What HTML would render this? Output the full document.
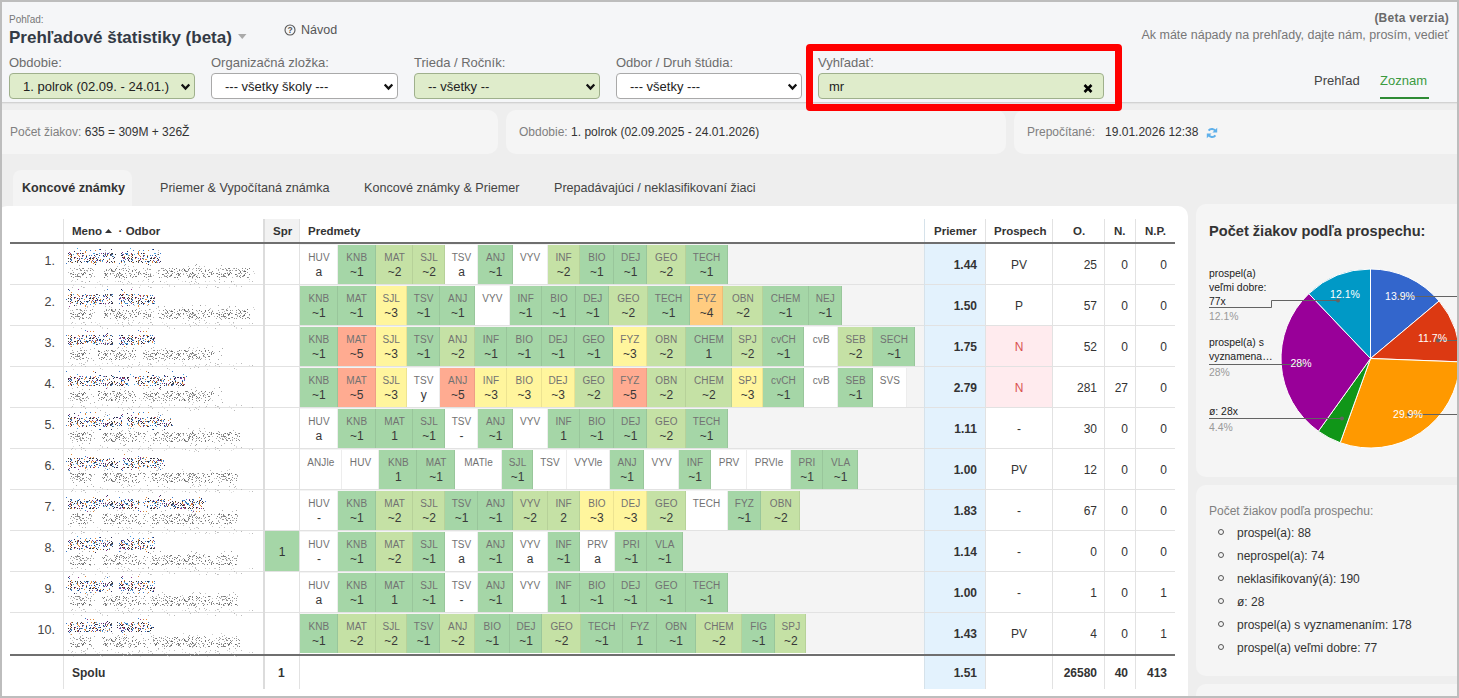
<!DOCTYPE html>
<html><head><meta charset="utf-8">
<style>
*{box-sizing:border-box}
html,body{margin:0;padding:0}
body{width:1459px;height:698px;overflow:hidden;position:relative;background:#eeeeee;font-family:"Liberation Sans",sans-serif;color:#333}
.frame{position:absolute;left:0;top:0;width:1459px;height:698px;border:2px solid #bdbdbd;pointer-events:none;z-index:50}
.abs{position:absolute;white-space:nowrap}
.hdr{position:absolute;left:0;top:0;width:1459px;height:101.5px;background:#f5f6f8;box-shadow:0 1px 1.5px rgba(0,0,0,.16)}
.lbl{position:absolute;top:55px;font-size:13px;color:#6c6c6c;white-space:nowrap}
.sel{position:absolute;top:73px;height:26px;border:1px solid #a9a9a9;border-radius:4px;background:#fff;font-size:13px;color:#222;padding:5px 0 0 13px;white-space:nowrap;overflow:hidden}
.sel.gr{background:#dfeccb;border-color:#9fb08c}
.chev{position:absolute;right:3px;top:9px;width:11px;height:8px}
.stat{position:absolute;top:110px;height:44px;background:#f5f5f5;border-radius:10px;font-size:12px;color:#333;padding:15px 0 0 9px;white-space:nowrap}
.stat .k{color:#808080}
.tabs{position:absolute;top:170px;font-size:12.6px;color:#444;white-space:nowrap}
.panel{position:absolute;left:-3px;top:205.5px;width:1191px;height:500px;background:#fff;border-radius:10px 10px 0 0}
.th{position:absolute;top:219px;height:24px;font-size:11.5px;font-weight:bold;color:#333;padding-top:6px;white-space:nowrap}
.row{position:absolute;left:300px;width:624px;height:40px;background:#f4f4f4}
.cells{display:flex;height:39px;margin-top:1px}
.c{flex:none;height:39px;text-align:center;box-shadow:inset -1px 0 0 rgba(0,0,0,.07);position:relative}
.c .l{position:absolute;left:0;right:0;top:6.5px;font-size:10px;color:#727272;letter-spacing:.1px}
.c .g{position:absolute;left:0;right:0;top:20px;font-size:12px;color:#383838}
.num,.pv,.pr,.o,.n,.np{position:absolute;height:40px;font-size:12px;padding-top:14px;white-space:nowrap}
.num{left:10px;width:45px;text-align:right;font-size:12.5px;color:#444;padding-top:10px!important}
.pv{left:925px;width:52px;text-align:right;font-weight:bold}
.pr{left:986px;width:66px;text-align:center}
.o{left:1053px;width:44px;text-align:right}
.n{left:1105px;width:23px;text-align:right}
.np{left:1136px;width:31px;text-align:right}
.hl{position:absolute;background:#e2e2e2}
</style></head><body>
<div class="frame"></div>
<div class="hdr"></div>
<div class="abs" style="left:9px;top:14px;font-size:10px;color:#777">Pohľad:</div>
<div class="abs" style="left:9px;top:27.5px;font-size:17px;font-weight:bold;color:#333a45">Prehľadové štatistiky (beta)</div>
<svg class="abs" style="left:238px;top:34px" width="9" height="6"><path d="M0 0H8.5L4.25 5z" fill="#aaa"/></svg>
<svg class="abs" style="left:284px;top:24px" width="12" height="12"><circle cx="6" cy="6" r="5" fill="none" stroke="#555" stroke-width="1.1"/><text x="6" y="9.3" font-size="8.5" font-weight="bold" text-anchor="middle" fill="#555" font-family="Liberation Sans">?</text></svg>
<div class="abs" style="left:301px;top:23px;font-size:12.5px;color:#555">Návod</div>

<div class="lbl" style="left:9px">Obdobie:</div>
<div class="lbl" style="left:211px">Organizačná zložka:</div>
<div class="lbl" style="left:414px">Trieda / Ročník:</div>
<div class="lbl" style="left:616px">Odbor / Druh štúdia:</div>
<div class="lbl" style="left:818px">Vyhľadať:</div>

<div class="sel gr" style="left:9px;width:186px">1. polrok (02.09. - 24.01.)<svg class="chev" viewBox="0 0 10 8"><path d="M1.2 1.5L5 5.6L8.8 1.5" fill="none" stroke="#111" stroke-width="2.3"/></svg></div>
<div class="sel" style="left:211px;width:187px">--- všetky školy ---<svg class="chev" viewBox="0 0 10 8"><path d="M1.2 1.5L5 5.6L8.8 1.5" fill="none" stroke="#111" stroke-width="2.3"/></svg></div>
<div class="sel gr" style="left:414px;width:186px">-- všetky --<svg class="chev" viewBox="0 0 10 8"><path d="M1.2 1.5L5 5.6L8.8 1.5" fill="none" stroke="#111" stroke-width="2.3"/></svg></div>
<div class="sel" style="left:616px;width:186px">--- všetky ---<svg class="chev" viewBox="0 0 10 8"><path d="M1.2 1.5L5 5.6L8.8 1.5" fill="none" stroke="#111" stroke-width="2.3"/></svg></div>
<div class="sel gr" style="left:818px;width:286px;padding-left:10px">mr<svg class="abs" style="left:263.5px;top:10px" width="10" height="9" viewBox="0 0 10 9"><path d="M1.5 1L8.5 8M8.5 1L1.5 8" stroke="#000" stroke-width="2.6"/></svg></div>
<div class="abs" style="left:806px;top:44px;width:316px;height:67px;border:7px solid #ff0000;border-radius:4px;z-index:20"></div>

<div class="abs" style="right:10px;top:11px;font-size:12px;font-weight:bold;color:#6a6a6a;letter-spacing:.25px">(Beta verzia)</div>
<div class="abs" style="right:10px;top:28px;font-size:12.5px;color:#777">Ak máte nápady na prehľady, dajte nám, prosím, vedieť</div>
<div class="abs" style="left:1314px;top:72.5px;font-size:13px;color:#444">Prehľad</div>
<div class="abs" style="left:1380px;top:72.5px;font-size:13px;color:#3b9a3f">Zoznam</div>
<div class="abs" style="left:1380px;top:97px;width:49px;height:2px;background:#2e8b35"></div>

<div class="stat" style="left:-10px;width:508px;padding-left:20px"><span class="k">Počet žiakov:</span> 635 = 309M + 326Ž</div>
<div class="stat" style="left:506px;width:500px;padding-left:13px"><span class="k">Obdobie:</span> 1. polrok (02.09.2025 - 24.01.2026)</div>
<div class="stat" style="left:1014px;width:460px;padding-left:13px"><span class="k">Prepočítané:</span>&nbsp;&nbsp; 19.01.2026 12:38 <svg width="12" height="12" viewBox="0 0 12 12" style="vertical-align:-3px;margin-left:4px"><path d="M9.6 4.6A4 4 0 0 0 2.6 3.6M2.4 7.4A4 4 0 0 0 9.4 8.4" fill="none" stroke="#5fb0ea" stroke-width="2"/><path d="M11.2 0.8V5.6H6.4zM0.8 11.2V6.4H5.6z" fill="#5fb0ea"/></svg></div>

<div class="abs" style="left:13px;top:170px;width:119px;height:36px;background:#f4f4f4;border-radius:8px 8px 0 0"></div>
<div class="tabs" style="left:22px;top:181px;font-weight:bold;color:#333">Koncové známky</div>
<div class="tabs" style="left:160px;top:181px">Priemer &amp; Vypočítaná známka</div>
<div class="tabs" style="left:364px;top:181px">Koncové známky &amp; Priemer</div>
<div class="tabs" style="left:554px;top:181px">Prepadávajúci / neklasifikovaní žiaci</div>

<div class="panel"></div>
<!-- table header -->
<div class="abs" style="left:264px;top:219px;width:36px;height:24px;background:#f2f2f2"></div>
<div class="abs" style="left:925px;top:244px;width:60px;height:445px;background:#e3f2fd"></div>
<div class="th" style="left:72px">Meno <svg width="7" height="4" style="vertical-align:2px"><path d="M0 4L3.5 0L7 4z" fill="#333"/></svg>&nbsp; · Odbor</div>
<div class="th" style="left:273px">Spr</div>
<div class="th" style="left:308px">Predmety</div>
<div class="th" style="left:934px">Priemer</div>
<div class="th" style="left:994px">Prospech</div>
<div class="th" style="left:1073px">O.</div>
<div class="th" style="left:1114px">N.</div>
<div class="th" style="left:1145px">N.P.</div>

<div class="row" style="top:244px"><div class="cells"><div class="c" style="width:37.9px;background:#ffffff"><span class="l">HUV</span><span class="g">a</span></div><div class="c" style="width:37.8px;background:#a5d6a7"><span class="l">KNB</span><span class="g">~1</span></div><div class="c" style="width:37.8px;background:#c5e1a5"><span class="l">MAT</span><span class="g">~2</span></div><div class="c" style="width:31.2px;background:#c5e1a5"><span class="l">SJL</span><span class="g">~2</span></div><div class="c" style="width:33.7px;background:#ffffff"><span class="l">TSV</span><span class="g">a</span></div><div class="c" style="width:34.5px;background:#a5d6a7"><span class="l">ANJ</span><span class="g">~1</span></div><div class="c" style="width:34.7px;background:#ffffff"><span class="l">VYV</span><span class="g"></span></div><div class="c" style="width:32.1px;background:#c5e1a5"><span class="l">INF</span><span class="g">~2</span></div><div class="c" style="width:34.6px;background:#a5d6a7"><span class="l">BIO</span><span class="g">~1</span></div><div class="c" style="width:32.9px;background:#a5d6a7"><span class="l">DEJ</span><span class="g">~1</span></div><div class="c" style="width:38.4px;background:#c5e1a5"><span class="l">GEO</span><span class="g">~2</span></div><div class="c" style="width:42.0px;background:#a5d6a7"><span class="l">TECH</span><span class="g">~1</span></div></div></div>
<div class="num" style="top:244px">1.</div>
<div class="pv" style="top:244px">1.44</div>
<div class="pr" style="top:244px">PV</div>
<div class="o" style="top:244px">25</div>
<div class="n" style="top:244px">0</div>
<div class="np" style="top:244px">0</div>
<div class="row" style="top:285px"><div class="cells"><div class="c" style="width:37.8px;background:#a5d6a7"><span class="l">KNB</span><span class="g">~1</span></div><div class="c" style="width:37.8px;background:#a5d6a7"><span class="l">MAT</span><span class="g">~1</span></div><div class="c" style="width:31.2px;background:#fff59d"><span class="l">SJL</span><span class="g">~3</span></div><div class="c" style="width:33.7px;background:#a5d6a7"><span class="l">TSV</span><span class="g">~1</span></div><div class="c" style="width:34.5px;background:#a5d6a7"><span class="l">ANJ</span><span class="g">~1</span></div><div class="c" style="width:34.7px;background:#ffffff"><span class="l">VYV</span><span class="g"></span></div><div class="c" style="width:32.1px;background:#a5d6a7"><span class="l">INF</span><span class="g">~1</span></div><div class="c" style="width:34.6px;background:#a5d6a7"><span class="l">BIO</span><span class="g">~1</span></div><div class="c" style="width:32.9px;background:#a5d6a7"><span class="l">DEJ</span><span class="g">~1</span></div><div class="c" style="width:38.4px;background:#c5e1a5"><span class="l">GEO</span><span class="g">~2</span></div><div class="c" style="width:42.0px;background:#a5d6a7"><span class="l">TECH</span><span class="g">~1</span></div><div class="c" style="width:33.8px;background:#ffcc80"><span class="l">FYZ</span><span class="g">~4</span></div><div class="c" style="width:39.1px;background:#c5e1a5"><span class="l">OBN</span><span class="g">~2</span></div><div class="c" style="width:46.2px;background:#a5d6a7"><span class="l">CHEM</span><span class="g">~1</span></div><div class="c" style="width:33.3px;background:#a5d6a7"><span class="l">NEJ</span><span class="g">~1</span></div></div></div>
<div class="num" style="top:285px">2.</div>
<div class="pv" style="top:285px">1.50</div>
<div class="pr" style="top:285px">P</div>
<div class="o" style="top:285px">57</div>
<div class="n" style="top:285px">0</div>
<div class="np" style="top:285px">0</div>
<div class="row" style="top:326px"><div class="cells"><div class="c" style="width:37.8px;background:#a5d6a7"><span class="l">KNB</span><span class="g">~1</span></div><div class="c" style="width:37.8px;background:#ffab91"><span class="l">MAT</span><span class="g">~5</span></div><div class="c" style="width:31.2px;background:#fff59d"><span class="l">SJL</span><span class="g">~3</span></div><div class="c" style="width:33.7px;background:#a5d6a7"><span class="l">TSV</span><span class="g">~1</span></div><div class="c" style="width:34.5px;background:#c5e1a5"><span class="l">ANJ</span><span class="g">~2</span></div><div class="c" style="width:32.1px;background:#a5d6a7"><span class="l">INF</span><span class="g">~1</span></div><div class="c" style="width:34.6px;background:#a5d6a7"><span class="l">BIO</span><span class="g">~1</span></div><div class="c" style="width:32.9px;background:#a5d6a7"><span class="l">DEJ</span><span class="g">~1</span></div><div class="c" style="width:38.4px;background:#a5d6a7"><span class="l">GEO</span><span class="g">~1</span></div><div class="c" style="width:33.8px;background:#fff59d"><span class="l">FYZ</span><span class="g">~3</span></div><div class="c" style="width:39.1px;background:#c5e1a5"><span class="l">OBN</span><span class="g">~2</span></div><div class="c" style="width:46.2px;background:#a5d6a7"><span class="l">CHEM</span><span class="g">1</span></div><div class="c" style="width:31.0px;background:#c5e1a5"><span class="l">SPJ</span><span class="g">~2</span></div><div class="c" style="width:41.0px;background:#a5d6a7"><span class="l">cvCH</span><span class="g">~1</span></div><div class="c" style="width:34.4px;background:#ffffff"><span class="l">cvB</span><span class="g"></span></div><div class="c" style="width:34.5px;background:#c5e1a5"><span class="l">SEB</span><span class="g">~2</span></div><div class="c" style="width:42.2px;background:#a5d6a7"><span class="l">SECH</span><span class="g">~1</span></div></div></div>
<div class="num" style="top:326px">3.</div>
<div class="pv" style="top:326px">1.75</div>
<div class="pr" style="background:#ffebee;color:#d9534f;top:326px">N</div>
<div class="o" style="top:326px">52</div>
<div class="n" style="top:326px">0</div>
<div class="np" style="top:326px">0</div>
<div class="row" style="top:367px"><div class="cells"><div class="c" style="width:37.8px;background:#a5d6a7"><span class="l">KNB</span><span class="g">~1</span></div><div class="c" style="width:37.8px;background:#ffab91"><span class="l">MAT</span><span class="g">~5</span></div><div class="c" style="width:31.2px;background:#fff59d"><span class="l">SJL</span><span class="g">~3</span></div><div class="c" style="width:33.7px;background:#ffffff"><span class="l">TSV</span><span class="g">y</span></div><div class="c" style="width:34.5px;background:#ffab91"><span class="l">ANJ</span><span class="g">~5</span></div><div class="c" style="width:32.1px;background:#fff59d"><span class="l">INF</span><span class="g">~3</span></div><div class="c" style="width:34.6px;background:#fff59d"><span class="l">BIO</span><span class="g">~3</span></div><div class="c" style="width:32.9px;background:#fff59d"><span class="l">DEJ</span><span class="g">~3</span></div><div class="c" style="width:38.4px;background:#c5e1a5"><span class="l">GEO</span><span class="g">~2</span></div><div class="c" style="width:33.8px;background:#ffab91"><span class="l">FYZ</span><span class="g">~5</span></div><div class="c" style="width:39.1px;background:#c5e1a5"><span class="l">OBN</span><span class="g">~2</span></div><div class="c" style="width:46.2px;background:#c5e1a5"><span class="l">CHEM</span><span class="g">~2</span></div><div class="c" style="width:31.0px;background:#fff59d"><span class="l">SPJ</span><span class="g">~3</span></div><div class="c" style="width:41.0px;background:#a5d6a7"><span class="l">cvCH</span><span class="g">~1</span></div><div class="c" style="width:34.4px;background:#ffffff"><span class="l">cvB</span><span class="g"></span></div><div class="c" style="width:34.5px;background:#a5d6a7"><span class="l">SEB</span><span class="g">~1</span></div><div class="c" style="width:33.9px;background:#ffffff"><span class="l">SVS</span><span class="g"></span></div></div></div>
<div class="num" style="top:367px">4.</div>
<div class="pv" style="top:367px">2.79</div>
<div class="pr" style="background:#ffebee;color:#d9534f;top:367px">N</div>
<div class="o" style="top:367px">281</div>
<div class="n" style="top:367px">27</div>
<div class="np" style="top:367px">0</div>
<div class="row" style="top:408px"><div class="cells"><div class="c" style="width:37.9px;background:#ffffff"><span class="l">HUV</span><span class="g">a</span></div><div class="c" style="width:37.8px;background:#a5d6a7"><span class="l">KNB</span><span class="g">~1</span></div><div class="c" style="width:37.8px;background:#a5d6a7"><span class="l">MAT</span><span class="g">1</span></div><div class="c" style="width:31.2px;background:#a5d6a7"><span class="l">SJL</span><span class="g">~1</span></div><div class="c" style="width:33.7px;background:#ffffff"><span class="l">TSV</span><span class="g">-</span></div><div class="c" style="width:34.5px;background:#a5d6a7"><span class="l">ANJ</span><span class="g">~1</span></div><div class="c" style="width:34.7px;background:#ffffff"><span class="l">VYV</span><span class="g"></span></div><div class="c" style="width:32.1px;background:#a5d6a7"><span class="l">INF</span><span class="g">1</span></div><div class="c" style="width:34.6px;background:#a5d6a7"><span class="l">BIO</span><span class="g">~1</span></div><div class="c" style="width:32.9px;background:#a5d6a7"><span class="l">DEJ</span><span class="g">~1</span></div><div class="c" style="width:38.4px;background:#c5e1a5"><span class="l">GEO</span><span class="g">~2</span></div><div class="c" style="width:42.0px;background:#a5d6a7"><span class="l">TECH</span><span class="g">~1</span></div></div></div>
<div class="num" style="top:408px">5.</div>
<div class="pv" style="top:408px">1.11</div>
<div class="pr" style="top:408px">-</div>
<div class="o" style="top:408px">30</div>
<div class="n" style="top:408px">0</div>
<div class="np" style="top:408px">0</div>
<div class="row" style="top:449px"><div class="cells"><div class="c" style="width:41.6px;background:#ffffff"><span class="l">ANJle</span><span class="g"></span></div><div class="c" style="width:37.9px;background:#ffffff"><span class="l">HUV</span><span class="g"></span></div><div class="c" style="width:37.8px;background:#a5d6a7"><span class="l">KNB</span><span class="g">1</span></div><div class="c" style="width:37.8px;background:#a5d6a7"><span class="l">MAT</span><span class="g">~1</span></div><div class="c" style="width:46.9px;background:#ffffff"><span class="l">MATle</span><span class="g"></span></div><div class="c" style="width:31.2px;background:#a5d6a7"><span class="l">SJL</span><span class="g">~1</span></div><div class="c" style="width:33.7px;background:#ffffff"><span class="l">TSV</span><span class="g"></span></div><div class="c" style="width:43.0px;background:#ffffff"><span class="l">VYVle</span><span class="g"></span></div><div class="c" style="width:34.5px;background:#a5d6a7"><span class="l">ANJ</span><span class="g">~1</span></div><div class="c" style="width:34.7px;background:#ffffff"><span class="l">VYV</span><span class="g"></span></div><div class="c" style="width:32.1px;background:#a5d6a7"><span class="l">INF</span><span class="g">~1</span></div><div class="c" style="width:35.8px;background:#ffffff"><span class="l">PRV</span><span class="g"></span></div><div class="c" style="width:44.2px;background:#ffffff"><span class="l">PRVle</span><span class="g"></span></div><div class="c" style="width:31.8px;background:#a5d6a7"><span class="l">PRI</span><span class="g">~1</span></div><div class="c" style="width:35.3px;background:#a5d6a7"><span class="l">VLA</span><span class="g">~1</span></div></div></div>
<div class="num" style="top:449px">6.</div>
<div class="pv" style="top:449px">1.00</div>
<div class="pr" style="top:449px">PV</div>
<div class="o" style="top:449px">12</div>
<div class="n" style="top:449px">0</div>
<div class="np" style="top:449px">0</div>
<div class="row" style="top:490px"><div class="cells"><div class="c" style="width:37.9px;background:#ffffff"><span class="l">HUV</span><span class="g">-</span></div><div class="c" style="width:37.8px;background:#a5d6a7"><span class="l">KNB</span><span class="g">~1</span></div><div class="c" style="width:37.8px;background:#c5e1a5"><span class="l">MAT</span><span class="g">~2</span></div><div class="c" style="width:31.2px;background:#c5e1a5"><span class="l">SJL</span><span class="g">~2</span></div><div class="c" style="width:33.7px;background:#a5d6a7"><span class="l">TSV</span><span class="g">~1</span></div><div class="c" style="width:34.5px;background:#a5d6a7"><span class="l">ANJ</span><span class="g">~1</span></div><div class="c" style="width:34.7px;background:#c5e1a5"><span class="l">VYV</span><span class="g">~2</span></div><div class="c" style="width:32.1px;background:#c5e1a5"><span class="l">INF</span><span class="g">2</span></div><div class="c" style="width:34.6px;background:#fff59d"><span class="l">BIO</span><span class="g">~3</span></div><div class="c" style="width:32.9px;background:#fff59d"><span class="l">DEJ</span><span class="g">~3</span></div><div class="c" style="width:38.4px;background:#c5e1a5"><span class="l">GEO</span><span class="g">~2</span></div><div class="c" style="width:42.0px;background:#ffffff"><span class="l">TECH</span><span class="g"></span></div><div class="c" style="width:33.8px;background:#a5d6a7"><span class="l">FYZ</span><span class="g">~1</span></div><div class="c" style="width:39.1px;background:#c5e1a5"><span class="l">OBN</span><span class="g">~2</span></div></div></div>
<div class="num" style="top:490px">7.</div>
<div class="pv" style="top:490px">1.83</div>
<div class="pr" style="top:490px">-</div>
<div class="o" style="top:490px">67</div>
<div class="n" style="top:490px">0</div>
<div class="np" style="top:490px">0</div>
<div class="row" style="top:531px"><div class="cells"><div class="c" style="width:37.9px;background:#ffffff"><span class="l">HUV</span><span class="g">-</span></div><div class="c" style="width:37.8px;background:#a5d6a7"><span class="l">KNB</span><span class="g">~1</span></div><div class="c" style="width:37.8px;background:#c5e1a5"><span class="l">MAT</span><span class="g">~2</span></div><div class="c" style="width:31.2px;background:#a5d6a7"><span class="l">SJL</span><span class="g">~1</span></div><div class="c" style="width:33.7px;background:#ffffff"><span class="l">TSV</span><span class="g">a</span></div><div class="c" style="width:34.5px;background:#a5d6a7"><span class="l">ANJ</span><span class="g">~1</span></div><div class="c" style="width:34.7px;background:#ffffff"><span class="l">VYV</span><span class="g">a</span></div><div class="c" style="width:32.1px;background:#a5d6a7"><span class="l">INF</span><span class="g">~1</span></div><div class="c" style="width:35.8px;background:#ffffff"><span class="l">PRV</span><span class="g">a</span></div><div class="c" style="width:31.8px;background:#a5d6a7"><span class="l">PRI</span><span class="g">~1</span></div><div class="c" style="width:35.3px;background:#a5d6a7"><span class="l">VLA</span><span class="g">~1</span></div></div></div>
<div class="num" style="top:531px">8.</div>
<div class="pv" style="top:531px">1.14</div>
<div class="pr" style="top:531px">-</div>
<div class="o" style="top:531px">0</div>
<div class="n" style="top:531px">0</div>
<div class="np" style="top:531px">0</div>
<div class="row" style="top:572px"><div class="cells"><div class="c" style="width:37.9px;background:#ffffff"><span class="l">HUV</span><span class="g">a</span></div><div class="c" style="width:37.8px;background:#a5d6a7"><span class="l">KNB</span><span class="g">~1</span></div><div class="c" style="width:37.8px;background:#a5d6a7"><span class="l">MAT</span><span class="g">1</span></div><div class="c" style="width:31.2px;background:#a5d6a7"><span class="l">SJL</span><span class="g">~1</span></div><div class="c" style="width:33.7px;background:#ffffff"><span class="l">TSV</span><span class="g">-</span></div><div class="c" style="width:34.5px;background:#a5d6a7"><span class="l">ANJ</span><span class="g">~1</span></div><div class="c" style="width:34.7px;background:#ffffff"><span class="l">VYV</span><span class="g"></span></div><div class="c" style="width:32.1px;background:#a5d6a7"><span class="l">INF</span><span class="g">1</span></div><div class="c" style="width:34.6px;background:#a5d6a7"><span class="l">BIO</span><span class="g">~1</span></div><div class="c" style="width:32.9px;background:#a5d6a7"><span class="l">DEJ</span><span class="g">~1</span></div><div class="c" style="width:38.4px;background:#a5d6a7"><span class="l">GEO</span><span class="g">~1</span></div><div class="c" style="width:42.0px;background:#a5d6a7"><span class="l">TECH</span><span class="g">~1</span></div></div></div>
<div class="num" style="top:572px">9.</div>
<div class="pv" style="top:572px">1.00</div>
<div class="pr" style="top:572px">-</div>
<div class="o" style="top:572px">1</div>
<div class="n" style="top:572px">0</div>
<div class="np" style="top:572px">1</div>
<div class="row" style="top:613px"><div class="cells"><div class="c" style="width:37.8px;background:#a5d6a7"><span class="l">KNB</span><span class="g">~1</span></div><div class="c" style="width:37.8px;background:#c5e1a5"><span class="l">MAT</span><span class="g">~2</span></div><div class="c" style="width:31.2px;background:#c5e1a5"><span class="l">SJL</span><span class="g">~2</span></div><div class="c" style="width:33.7px;background:#a5d6a7"><span class="l">TSV</span><span class="g">~1</span></div><div class="c" style="width:34.5px;background:#c5e1a5"><span class="l">ANJ</span><span class="g">~2</span></div><div class="c" style="width:34.6px;background:#a5d6a7"><span class="l">BIO</span><span class="g">~1</span></div><div class="c" style="width:32.9px;background:#a5d6a7"><span class="l">DEJ</span><span class="g">~1</span></div><div class="c" style="width:38.4px;background:#c5e1a5"><span class="l">GEO</span><span class="g">~2</span></div><div class="c" style="width:42.0px;background:#a5d6a7"><span class="l">TECH</span><span class="g">~1</span></div><div class="c" style="width:33.8px;background:#a5d6a7"><span class="l">FYZ</span><span class="g">1</span></div><div class="c" style="width:39.1px;background:#a5d6a7"><span class="l">OBN</span><span class="g">~1</span></div><div class="c" style="width:46.2px;background:#c5e1a5"><span class="l">CHEM</span><span class="g">~2</span></div><div class="c" style="width:33.5px;background:#a5d6a7"><span class="l">FIG</span><span class="g">~1</span></div><div class="c" style="width:31.0px;background:#c5e1a5"><span class="l">SPJ</span><span class="g">~2</span></div></div></div>
<div class="num" style="top:613px">10.</div>
<div class="pv" style="top:613px">1.43</div>
<div class="pr" style="top:613px">PV</div>
<div class="o" style="top:613px">4</div>
<div class="n" style="top:613px">0</div>
<div class="np" style="top:613px">1</div>

<!-- spr green cell row 8 -->
<div class="abs" style="left:265px;top:531px;width:34px;height:40px;background:#a5d6a7;font-size:12px;text-align:center;padding-top:14px">1</div>

<!-- grid lines -->
<div class="hl" style="left:10px;top:284px;width:1165px;height:1px"></div>
<div class="hl" style="left:10px;top:325px;width:1165px;height:1px"></div>
<div class="hl" style="left:10px;top:366px;width:1165px;height:1px"></div>
<div class="hl" style="left:10px;top:407px;width:1165px;height:1px"></div>
<div class="hl" style="left:10px;top:448px;width:1165px;height:1px"></div>
<div class="hl" style="left:10px;top:489px;width:1165px;height:1px"></div>
<div class="hl" style="left:10px;top:530px;width:1165px;height:1px"></div>
<div class="hl" style="left:10px;top:571px;width:1165px;height:1px"></div>
<div class="hl" style="left:10px;top:612px;width:1165px;height:1px"></div>
<div class="hl" style="left:63px;top:219px;width:1px;height:470px"></div>
<div class="hl" style="left:263px;top:219px;width:2px;height:470px;background:#dcdcdc"></div>
<div class="hl" style="left:299px;top:219px;width:1px;height:470px"></div>
<div class="hl" style="left:924px;top:219px;width:1px;height:470px;background:#d6e2ea"></div>
<div class="hl" style="left:985px;top:219px;width:1px;height:470px"></div>
<div class="hl" style="left:1052px;top:219px;width:1px;height:470px"></div>
<div class="hl" style="left:1104px;top:219px;width:1px;height:470px"></div>
<div class="hl" style="left:1135px;top:219px;width:1px;height:470px"></div>
<div class="abs" style="left:10px;top:242px;width:1165px;height:2px;background:#6f6f6f"></div>
<div class="abs" style="left:10px;top:654px;width:1165px;height:2px;background:#6f6f6f"></div>

<!-- footer -->
<div class="abs" style="left:72px;top:666px;font-size:12px;font-weight:bold">Spolu</div>
<div class="abs" style="left:278px;top:666px;font-size:12px;font-weight:bold">1</div>
<div class="abs" style="left:925px;width:52px;text-align:right;top:666px;font-size:12px;font-weight:bold">1.51</div>
<div class="abs" style="left:1053px;width:44px;text-align:right;top:666px;font-size:12px;font-weight:bold">26580</div>
<div class="abs" style="left:1105px;width:23px;text-align:right;top:666px;font-size:12px;font-weight:bold">40</div>
<div class="abs" style="left:1136px;width:31px;text-align:right;top:666px;font-size:12px;font-weight:bold">413</div>

<svg class="abs" style="left:0;top:0;z-index:5" width="300" height="698"><defs><pattern id="pn" width="61" height="10" patternUnits="userSpaceOnUse"><rect x="20" y="2" width="1" height="1" fill="#333"/><rect x="41" y="0" width="1" height="1" fill="#3a78c9"/><rect x="52" y="8" width="1" height="1" fill="#3a78c9"/><rect x="23" y="9" width="1" height="1" fill="#e08a3c"/><rect x="58" y="8" width="1" height="1" fill="#8a3a8a"/><rect x="2" y="1" width="1" height="1" fill="#333"/><rect x="26" y="1" width="1" height="1" fill="#8a3a8a"/><rect x="5" y="8" width="1" height="1" fill="#333"/><rect x="3" y="9" width="1" height="1" fill="#3a78c9"/><rect x="60" y="3" width="1" height="1" fill="#e08a3c"/><rect x="36" y="9" width="1" height="1" fill="#333"/><rect x="3" y="3" width="1" height="1" fill="#e08a3c"/><rect x="35" y="2" width="1" height="1" fill="#4aa3e0"/><rect x="26" y="2" width="1" height="1" fill="#3a78c9"/><rect x="36" y="4" width="1" height="1" fill="#2b2b55"/><rect x="6" y="9" width="1" height="1" fill="#8a3a8a"/><rect x="23" y="1" width="1" height="1" fill="#3a78c9"/><rect x="36" y="0" width="1" height="1" fill="#8a3a8a"/><rect x="31" y="8" width="1" height="1" fill="#333"/><rect x="49" y="5" width="1" height="1" fill="#555"/><rect x="37" y="7" width="1" height="1" fill="#c9652b"/><rect x="19" y="3" width="1" height="1" fill="#2b2b55"/><rect x="44" y="3" width="1" height="1" fill="#3a78c9"/><rect x="36" y="4" width="1" height="1" fill="#555"/><rect x="56" y="5" width="1" height="1" fill="#555"/><rect x="18" y="9" width="1" height="1" fill="#3a78c9"/><rect x="7" y="8" width="1" height="1" fill="#333"/><rect x="10" y="5" width="1" height="1" fill="#2b2b55"/><rect x="59" y="7" width="1" height="1" fill="#333"/><rect x="2" y="1" width="1" height="1" fill="#c9652b"/><rect x="21" y="5" width="1" height="1" fill="#555"/><rect x="37" y="7" width="1" height="1" fill="#3a78c9"/><rect x="53" y="1" width="1" height="1" fill="#4aa3e0"/><rect x="30" y="1" width="1" height="1" fill="#e08a3c"/><rect x="46" y="4" width="1" height="1" fill="#555"/><rect x="18" y="6" width="1" height="1" fill="#c9652b"/><rect x="1" y="7" width="1" height="1" fill="#c9652b"/><rect x="10" y="9" width="1" height="1" fill="#3a78c9"/><rect x="31" y="0" width="1" height="1" fill="#8a3a8a"/><rect x="49" y="4" width="1" height="1" fill="#2b2b55"/><rect x="47" y="3" width="1" height="1" fill="#333"/><rect x="25" y="7" width="1" height="1" fill="#3a78c9"/><rect x="10" y="7" width="1" height="1" fill="#333"/><rect x="35" y="4" width="1" height="1" fill="#2b2b55"/><rect x="52" y="6" width="1" height="1" fill="#4aa3e0"/><rect x="45" y="6" width="1" height="1" fill="#c9652b"/><rect x="43" y="6" width="1" height="1" fill="#8a3a8a"/><rect x="9" y="1" width="1" height="1" fill="#2b2b55"/><rect x="9" y="3" width="1" height="1" fill="#8a3a8a"/><rect x="0" y="7" width="1" height="1" fill="#2b2b55"/><rect x="16" y="4" width="1" height="1" fill="#e08a3c"/><rect x="9" y="6" width="1" height="1" fill="#c9652b"/><rect x="39" y="9" width="1" height="1" fill="#c9652b"/><rect x="60" y="2" width="1" height="1" fill="#e08a3c"/><rect x="29" y="8" width="1" height="1" fill="#333"/><rect x="25" y="6" width="1" height="1" fill="#333"/><rect x="6" y="7" width="1" height="1" fill="#333"/><rect x="3" y="3" width="1" height="1" fill="#3a78c9"/><rect x="13" y="7" width="1" height="1" fill="#2b2b55"/><rect x="7" y="5" width="1" height="1" fill="#e08a3c"/><rect x="6" y="0" width="1" height="1" fill="#2b2b55"/><rect x="34" y="1" width="1" height="1" fill="#c9652b"/><rect x="39" y="0" width="1" height="1" fill="#3a78c9"/><rect x="55" y="3" width="1" height="1" fill="#333"/><rect x="9" y="4" width="1" height="1" fill="#c9652b"/><rect x="38" y="5" width="1" height="1" fill="#555"/><rect x="7" y="1" width="1" height="1" fill="#555"/><rect x="29" y="7" width="1" height="1" fill="#555"/><rect x="19" y="1" width="1" height="1" fill="#2b2b55"/><rect x="6" y="5" width="1" height="1" fill="#4aa3e0"/><rect x="30" y="2" width="1" height="1" fill="#e08a3c"/><rect x="13" y="8" width="1" height="1" fill="#c9652b"/><rect x="9" y="8" width="1" height="1" fill="#e08a3c"/><rect x="48" y="8" width="1" height="1" fill="#4aa3e0"/><rect x="41" y="1" width="1" height="1" fill="#4aa3e0"/><rect x="33" y="5" width="1" height="1" fill="#2b2b55"/><rect x="22" y="3" width="1" height="1" fill="#c9652b"/><rect x="40" y="3" width="1" height="1" fill="#8a3a8a"/><rect x="51" y="3" width="1" height="1" fill="#333"/><rect x="47" y="3" width="1" height="1" fill="#8a3a8a"/><rect x="33" y="7" width="1" height="1" fill="#c9652b"/><rect x="46" y="0" width="1" height="1" fill="#e08a3c"/><rect x="50" y="4" width="1" height="1" fill="#555"/><rect x="16" y="3" width="1" height="1" fill="#c9652b"/><rect x="28" y="5" width="1" height="1" fill="#c9652b"/><rect x="5" y="3" width="1" height="1" fill="#3a78c9"/><rect x="14" y="7" width="1" height="1" fill="#8a3a8a"/><rect x="21" y="3" width="1" height="1" fill="#555"/><rect x="39" y="9" width="1" height="1" fill="#e08a3c"/><rect x="30" y="5" width="1" height="1" fill="#3a78c9"/><rect x="53" y="1" width="1" height="1" fill="#333"/><rect x="50" y="3" width="1" height="1" fill="#555"/><rect x="56" y="2" width="1" height="1" fill="#333"/><rect x="50" y="5" width="1" height="1" fill="#3a78c9"/><rect x="51" y="6" width="1" height="1" fill="#555"/><rect x="25" y="1" width="1" height="1" fill="#2b2b55"/><rect x="10" y="2" width="1" height="1" fill="#e08a3c"/><rect x="9" y="9" width="1" height="1" fill="#555"/><rect x="51" y="2" width="1" height="1" fill="#555"/><rect x="42" y="5" width="1" height="1" fill="#2b2b55"/><rect x="35" y="8" width="1" height="1" fill="#2b2b55"/><rect x="1" y="0" width="1" height="1" fill="#3a78c9"/><rect x="33" y="2" width="1" height="1" fill="#333"/><rect x="55" y="3" width="1" height="1" fill="#8a3a8a"/><rect x="1" y="4" width="1" height="1" fill="#8a3a8a"/><rect x="18" y="8" width="1" height="1" fill="#8a3a8a"/><rect x="48" y="9" width="1" height="1" fill="#c9652b"/><rect x="16" y="8" width="1" height="1" fill="#333"/><rect x="53" y="2" width="1" height="1" fill="#e08a3c"/><rect x="58" y="5" width="1" height="1" fill="#555"/><rect x="42" y="9" width="1" height="1" fill="#333"/><rect x="52" y="8" width="1" height="1" fill="#2b2b55"/><rect x="34" y="2" width="1" height="1" fill="#e08a3c"/><rect x="55" y="7" width="1" height="1" fill="#2b2b55"/><rect x="38" y="0" width="1" height="1" fill="#2b2b55"/><rect x="11" y="2" width="1" height="1" fill="#555"/><rect x="39" y="1" width="1" height="1" fill="#e08a3c"/><rect x="20" y="8" width="1" height="1" fill="#555"/><rect x="50" y="1" width="1" height="1" fill="#e08a3c"/><rect x="15" y="3" width="1" height="1" fill="#4aa3e0"/><rect x="2" y="1" width="1" height="1" fill="#555"/><rect x="35" y="0" width="1" height="1" fill="#3a78c9"/><rect x="28" y="5" width="1" height="1" fill="#8a3a8a"/><rect x="44" y="4" width="1" height="1" fill="#555"/><rect x="32" y="8" width="1" height="1" fill="#555"/><rect x="32" y="3" width="1" height="1" fill="#4aa3e0"/><rect x="59" y="8" width="1" height="1" fill="#8a3a8a"/><rect x="53" y="7" width="1" height="1" fill="#2b2b55"/><rect x="26" y="1" width="1" height="1" fill="#333"/><rect x="28" y="5" width="1" height="1" fill="#3a78c9"/><rect x="42" y="3" width="1" height="1" fill="#333"/><rect x="4" y="3" width="1" height="1" fill="#4aa3e0"/><rect x="50" y="1" width="1" height="1" fill="#2b2b55"/><rect x="60" y="5" width="1" height="1" fill="#2b2b55"/><rect x="16" y="2" width="1" height="1" fill="#555"/><rect x="14" y="1" width="1" height="1" fill="#333"/><rect x="56" y="7" width="1" height="1" fill="#2b2b55"/><rect x="42" y="3" width="1" height="1" fill="#2b2b55"/><rect x="45" y="6" width="1" height="1" fill="#333"/><rect x="21" y="6" width="1" height="1" fill="#8a3a8a"/><rect x="22" y="5" width="1" height="1" fill="#3a78c9"/><rect x="46" y="5" width="1" height="1" fill="#e08a3c"/><rect x="21" y="8" width="1" height="1" fill="#555"/><rect x="28" y="0" width="1" height="1" fill="#333"/><rect x="21" y="8" width="1" height="1" fill="#4aa3e0"/><rect x="32" y="1" width="1" height="1" fill="#3a78c9"/><rect x="58" y="3" width="1" height="1" fill="#3a78c9"/><rect x="5" y="4" width="1" height="1" fill="#4aa3e0"/><rect x="2" y="2" width="1" height="1" fill="#4aa3e0"/><rect x="48" y="2" width="1" height="1" fill="#333"/><rect x="54" y="4" width="1" height="1" fill="#333"/><rect x="9" y="8" width="1" height="1" fill="#555"/><rect x="44" y="5" width="1" height="1" fill="#3a78c9"/><rect x="17" y="0" width="1" height="1" fill="#2b2b55"/><rect x="27" y="1" width="1" height="1" fill="#4aa3e0"/><rect x="60" y="0" width="1" height="1" fill="#3a78c9"/><rect x="51" y="4" width="1" height="1" fill="#3a78c9"/><rect x="38" y="3" width="1" height="1" fill="#3a78c9"/><rect x="16" y="1" width="1" height="1" fill="#555"/><rect x="0" y="5" width="1" height="1" fill="#333"/><rect x="59" y="4" width="1" height="1" fill="#2b2b55"/><rect x="2" y="8" width="1" height="1" fill="#8a3a8a"/><rect x="60" y="1" width="1" height="1" fill="#2b2b55"/><rect x="16" y="0" width="1" height="1" fill="#2b2b55"/><rect x="12" y="4" width="1" height="1" fill="#4aa3e0"/><rect x="33" y="3" width="1" height="1" fill="#4aa3e0"/><rect x="28" y="8" width="1" height="1" fill="#2b2b55"/><rect x="17" y="5" width="1" height="1" fill="#e08a3c"/><rect x="16" y="0" width="1" height="1" fill="#e08a3c"/><rect x="1" y="8" width="1" height="1" fill="#8a3a8a"/><rect x="32" y="7" width="1" height="1" fill="#8a3a8a"/><rect x="59" y="7" width="1" height="1" fill="#3a78c9"/><rect x="42" y="6" width="1" height="1" fill="#555"/><rect x="34" y="6" width="1" height="1" fill="#4aa3e0"/><rect x="44" y="3" width="1" height="1" fill="#8a3a8a"/><rect x="21" y="3" width="1" height="1" fill="#2b2b55"/><rect x="25" y="5" width="1" height="1" fill="#e08a3c"/><rect x="53" y="2" width="1" height="1" fill="#e08a3c"/><rect x="4" y="4" width="1" height="1" fill="#333"/><rect x="10" y="0" width="1" height="1" fill="#3a78c9"/><rect x="42" y="6" width="1" height="1" fill="#4aa3e0"/><rect x="38" y="3" width="1" height="1" fill="#4aa3e0"/><rect x="2" y="7" width="1" height="1" fill="#2b2b55"/><rect x="10" y="4" width="1" height="1" fill="#555"/><rect x="0" y="4" width="1" height="1" fill="#c9652b"/></pattern><pattern id="pnh" width="53" height="18" patternUnits="userSpaceOnUse"><rect x="21" y="17" width="1" height="1" fill="#2b2b55"/><rect x="15" y="1" width="1" height="1" fill="#2b2b55"/><rect x="13" y="11" width="1" height="1" fill="#3a78c9"/><rect x="0" y="10" width="1" height="1" fill="#8a3a8a"/><rect x="5" y="15" width="1" height="1" fill="#2b2b55"/><rect x="32" y="6" width="1" height="1" fill="#3a78c9"/><rect x="32" y="0" width="1" height="1" fill="#e08a3c"/><rect x="16" y="2" width="1" height="1" fill="#3a78c9"/><rect x="25" y="1" width="1" height="1" fill="#8a3a8a"/><rect x="1" y="9" width="1" height="1" fill="#2b2b55"/><rect x="40" y="7" width="1" height="1" fill="#e08a3c"/><rect x="37" y="16" width="1" height="1" fill="#3a78c9"/><rect x="42" y="12" width="1" height="1" fill="#2b2b55"/><rect x="46" y="15" width="1" height="1" fill="#3a78c9"/><rect x="18" y="4" width="1" height="1" fill="#e08a3c"/><rect x="52" y="16" width="1" height="1" fill="#bbb"/><rect x="27" y="16" width="1" height="1" fill="#3a78c9"/><rect x="33" y="16" width="1" height="1" fill="#4aa3e0"/><rect x="52" y="0" width="1" height="1" fill="#bbb"/><rect x="37" y="7" width="1" height="1" fill="#e08a3c"/><rect x="1" y="1" width="1" height="1" fill="#3a78c9"/><rect x="40" y="11" width="1" height="1" fill="#e08a3c"/><rect x="24" y="14" width="1" height="1" fill="#4aa3e0"/><rect x="3" y="0" width="1" height="1" fill="#bbb"/><rect x="34" y="7" width="1" height="1" fill="#8a3a8a"/><rect x="16" y="0" width="1" height="1" fill="#8a3a8a"/><rect x="51" y="2" width="1" height="1" fill="#bbb"/><rect x="32" y="17" width="1" height="1" fill="#e08a3c"/><rect x="42" y="16" width="1" height="1" fill="#e08a3c"/><rect x="47" y="15" width="1" height="1" fill="#2b2b55"/></pattern><pattern id="pg" width="73" height="10" patternUnits="userSpaceOnUse"><rect x="9" y="4" width="1" height="1" fill="#999"/><rect x="26" y="3" width="1" height="1" fill="#888"/><rect x="63" y="6" width="1" height="1" fill="#777"/><rect x="61" y="4" width="1" height="1" fill="#777"/><rect x="25" y="1" width="1" height="1" fill="#666"/><rect x="18" y="5" width="1" height="1" fill="#aaa"/><rect x="38" y="9" width="1" height="1" fill="#666"/><rect x="17" y="0" width="1" height="1" fill="#888"/><rect x="7" y="7" width="1" height="1" fill="#aaa"/><rect x="12" y="3" width="1" height="1" fill="#888"/><rect x="37" y="8" width="1" height="1" fill="#aaa"/><rect x="59" y="7" width="1" height="1" fill="#888"/><rect x="15" y="8" width="1" height="1" fill="#999"/><rect x="39" y="1" width="1" height="1" fill="#888"/><rect x="2" y="4" width="1" height="1" fill="#888"/><rect x="9" y="8" width="1" height="1" fill="#888"/><rect x="34" y="6" width="1" height="1" fill="#999"/><rect x="26" y="1" width="1" height="1" fill="#666"/><rect x="11" y="2" width="1" height="1" fill="#666"/><rect x="33" y="5" width="1" height="1" fill="#999"/><rect x="65" y="4" width="1" height="1" fill="#777"/><rect x="46" y="3" width="1" height="1" fill="#888"/><rect x="62" y="6" width="1" height="1" fill="#777"/><rect x="20" y="0" width="1" height="1" fill="#888"/><rect x="57" y="6" width="1" height="1" fill="#aaa"/><rect x="18" y="6" width="1" height="1" fill="#aaa"/><rect x="48" y="5" width="1" height="1" fill="#777"/><rect x="42" y="0" width="1" height="1" fill="#aaa"/><rect x="43" y="6" width="1" height="1" fill="#777"/><rect x="25" y="0" width="1" height="1" fill="#aaa"/><rect x="32" y="5" width="1" height="1" fill="#777"/><rect x="50" y="6" width="1" height="1" fill="#666"/><rect x="9" y="5" width="1" height="1" fill="#888"/><rect x="35" y="0" width="1" height="1" fill="#aaa"/><rect x="13" y="0" width="1" height="1" fill="#aaa"/><rect x="19" y="3" width="1" height="1" fill="#aaa"/><rect x="55" y="8" width="1" height="1" fill="#aaa"/><rect x="24" y="5" width="1" height="1" fill="#888"/><rect x="3" y="6" width="1" height="1" fill="#666"/><rect x="70" y="3" width="1" height="1" fill="#777"/><rect x="6" y="6" width="1" height="1" fill="#888"/><rect x="17" y="4" width="1" height="1" fill="#888"/><rect x="6" y="8" width="1" height="1" fill="#999"/><rect x="21" y="7" width="1" height="1" fill="#888"/><rect x="43" y="4" width="1" height="1" fill="#aaa"/><rect x="32" y="4" width="1" height="1" fill="#888"/><rect x="30" y="4" width="1" height="1" fill="#888"/><rect x="71" y="6" width="1" height="1" fill="#777"/><rect x="21" y="2" width="1" height="1" fill="#777"/><rect x="26" y="8" width="1" height="1" fill="#888"/><rect x="70" y="3" width="1" height="1" fill="#888"/><rect x="42" y="7" width="1" height="1" fill="#888"/><rect x="17" y="8" width="1" height="1" fill="#999"/><rect x="31" y="1" width="1" height="1" fill="#999"/><rect x="43" y="8" width="1" height="1" fill="#777"/><rect x="40" y="3" width="1" height="1" fill="#aaa"/><rect x="33" y="9" width="1" height="1" fill="#999"/><rect x="2" y="6" width="1" height="1" fill="#888"/><rect x="52" y="8" width="1" height="1" fill="#999"/><rect x="48" y="4" width="1" height="1" fill="#aaa"/><rect x="7" y="7" width="1" height="1" fill="#aaa"/><rect x="46" y="2" width="1" height="1" fill="#666"/><rect x="67" y="3" width="1" height="1" fill="#777"/><rect x="34" y="3" width="1" height="1" fill="#888"/><rect x="51" y="7" width="1" height="1" fill="#888"/><rect x="39" y="0" width="1" height="1" fill="#999"/><rect x="4" y="6" width="1" height="1" fill="#888"/><rect x="62" y="0" width="1" height="1" fill="#777"/><rect x="50" y="8" width="1" height="1" fill="#888"/><rect x="57" y="3" width="1" height="1" fill="#777"/><rect x="28" y="2" width="1" height="1" fill="#999"/><rect x="66" y="1" width="1" height="1" fill="#888"/><rect x="10" y="8" width="1" height="1" fill="#777"/><rect x="0" y="2" width="1" height="1" fill="#999"/><rect x="72" y="0" width="1" height="1" fill="#aaa"/><rect x="16" y="4" width="1" height="1" fill="#666"/><rect x="55" y="1" width="1" height="1" fill="#777"/><rect x="9" y="4" width="1" height="1" fill="#666"/><rect x="24" y="6" width="1" height="1" fill="#aaa"/><rect x="28" y="9" width="1" height="1" fill="#777"/><rect x="1" y="8" width="1" height="1" fill="#aaa"/><rect x="58" y="4" width="1" height="1" fill="#aaa"/><rect x="31" y="7" width="1" height="1" fill="#666"/><rect x="30" y="8" width="1" height="1" fill="#999"/><rect x="3" y="6" width="1" height="1" fill="#aaa"/><rect x="7" y="0" width="1" height="1" fill="#999"/><rect x="63" y="6" width="1" height="1" fill="#777"/><rect x="32" y="3" width="1" height="1" fill="#888"/><rect x="47" y="3" width="1" height="1" fill="#888"/><rect x="4" y="5" width="1" height="1" fill="#888"/><rect x="46" y="6" width="1" height="1" fill="#999"/><rect x="0" y="4" width="1" height="1" fill="#666"/><rect x="8" y="3" width="1" height="1" fill="#888"/><rect x="25" y="4" width="1" height="1" fill="#999"/><rect x="29" y="7" width="1" height="1" fill="#999"/><rect x="33" y="4" width="1" height="1" fill="#777"/><rect x="63" y="9" width="1" height="1" fill="#999"/><rect x="28" y="7" width="1" height="1" fill="#888"/><rect x="7" y="9" width="1" height="1" fill="#999"/><rect x="50" y="0" width="1" height="1" fill="#999"/><rect x="3" y="9" width="1" height="1" fill="#999"/><rect x="53" y="0" width="1" height="1" fill="#777"/><rect x="23" y="6" width="1" height="1" fill="#888"/><rect x="40" y="1" width="1" height="1" fill="#777"/><rect x="21" y="5" width="1" height="1" fill="#999"/><rect x="23" y="8" width="1" height="1" fill="#888"/><rect x="4" y="4" width="1" height="1" fill="#888"/><rect x="47" y="5" width="1" height="1" fill="#888"/><rect x="21" y="1" width="1" height="1" fill="#777"/><rect x="10" y="4" width="1" height="1" fill="#777"/><rect x="44" y="6" width="1" height="1" fill="#777"/><rect x="71" y="3" width="1" height="1" fill="#888"/><rect x="45" y="4" width="1" height="1" fill="#888"/><rect x="11" y="0" width="1" height="1" fill="#888"/><rect x="25" y="5" width="1" height="1" fill="#666"/><rect x="57" y="3" width="1" height="1" fill="#aaa"/><rect x="46" y="7" width="1" height="1" fill="#777"/><rect x="52" y="3" width="1" height="1" fill="#888"/><rect x="5" y="6" width="1" height="1" fill="#777"/><rect x="59" y="1" width="1" height="1" fill="#777"/><rect x="32" y="3" width="1" height="1" fill="#777"/><rect x="43" y="5" width="1" height="1" fill="#aaa"/><rect x="42" y="9" width="1" height="1" fill="#777"/><rect x="33" y="5" width="1" height="1" fill="#aaa"/><rect x="38" y="0" width="1" height="1" fill="#666"/><rect x="8" y="0" width="1" height="1" fill="#999"/><rect x="13" y="7" width="1" height="1" fill="#888"/><rect x="49" y="4" width="1" height="1" fill="#888"/><rect x="63" y="2" width="1" height="1" fill="#888"/><rect x="23" y="0" width="1" height="1" fill="#aaa"/><rect x="19" y="9" width="1" height="1" fill="#999"/><rect x="41" y="5" width="1" height="1" fill="#888"/><rect x="46" y="9" width="1" height="1" fill="#777"/><rect x="65" y="3" width="1" height="1" fill="#888"/><rect x="20" y="3" width="1" height="1" fill="#888"/><rect x="8" y="0" width="1" height="1" fill="#888"/><rect x="70" y="8" width="1" height="1" fill="#aaa"/><rect x="20" y="6" width="1" height="1" fill="#777"/><rect x="9" y="4" width="1" height="1" fill="#666"/><rect x="10" y="3" width="1" height="1" fill="#777"/><rect x="53" y="7" width="1" height="1" fill="#888"/><rect x="22" y="3" width="1" height="1" fill="#999"/><rect x="53" y="7" width="1" height="1" fill="#666"/><rect x="30" y="8" width="1" height="1" fill="#777"/><rect x="37" y="4" width="1" height="1" fill="#aaa"/><rect x="72" y="4" width="1" height="1" fill="#aaa"/><rect x="32" y="4" width="1" height="1" fill="#999"/><rect x="56" y="3" width="1" height="1" fill="#999"/><rect x="31" y="3" width="1" height="1" fill="#999"/><rect x="36" y="9" width="1" height="1" fill="#999"/><rect x="41" y="1" width="1" height="1" fill="#888"/><rect x="32" y="3" width="1" height="1" fill="#666"/><rect x="67" y="3" width="1" height="1" fill="#777"/><rect x="59" y="0" width="1" height="1" fill="#777"/><rect x="0" y="7" width="1" height="1" fill="#999"/><rect x="57" y="5" width="1" height="1" fill="#777"/><rect x="37" y="3" width="1" height="1" fill="#777"/><rect x="6" y="3" width="1" height="1" fill="#666"/><rect x="24" y="1" width="1" height="1" fill="#aaa"/><rect x="65" y="2" width="1" height="1" fill="#888"/><rect x="33" y="0" width="1" height="1" fill="#777"/><rect x="44" y="3" width="1" height="1" fill="#777"/><rect x="47" y="5" width="1" height="1" fill="#999"/><rect x="5" y="3" width="1" height="1" fill="#aaa"/><rect x="4" y="9" width="1" height="1" fill="#999"/></pattern><pattern id="pgh" width="71" height="18" patternUnits="userSpaceOnUse"><rect x="1" y="10" width="1" height="1" fill="#ccc"/><rect x="47" y="5" width="1" height="1" fill="#999"/><rect x="9" y="6" width="1" height="1" fill="#aaa"/><rect x="63" y="17" width="1" height="1" fill="#ccc"/><rect x="8" y="13" width="1" height="1" fill="#aaa"/><rect x="50" y="17" width="1" height="1" fill="#bbb"/><rect x="68" y="2" width="1" height="1" fill="#bbb"/><rect x="50" y="8" width="1" height="1" fill="#ccc"/><rect x="36" y="9" width="1" height="1" fill="#ccc"/><rect x="6" y="9" width="1" height="1" fill="#999"/><rect x="53" y="13" width="1" height="1" fill="#aaa"/><rect x="46" y="6" width="1" height="1" fill="#ccc"/><rect x="51" y="6" width="1" height="1" fill="#aaa"/><rect x="55" y="5" width="1" height="1" fill="#ccc"/><rect x="14" y="2" width="1" height="1" fill="#ccc"/><rect x="46" y="14" width="1" height="1" fill="#bbb"/><rect x="16" y="0" width="1" height="1" fill="#aaa"/><rect x="70" y="4" width="1" height="1" fill="#ccc"/><rect x="11" y="11" width="1" height="1" fill="#bbb"/><rect x="18" y="11" width="1" height="1" fill="#999"/><rect x="20" y="16" width="1" height="1" fill="#bbb"/><rect x="8" y="3" width="1" height="1" fill="#ccc"/><rect x="62" y="6" width="1" height="1" fill="#999"/><rect x="16" y="1" width="1" height="1" fill="#ccc"/><rect x="40" y="1" width="1" height="1" fill="#ccc"/><rect x="11" y="5" width="1" height="1" fill="#bbb"/><rect x="51" y="6" width="1" height="1" fill="#ccc"/><rect x="23" y="6" width="1" height="1" fill="#aaa"/><rect x="51" y="16" width="1" height="1" fill="#bbb"/><rect x="49" y="11" width="1" height="1" fill="#aaa"/><rect x="19" y="7" width="1" height="1" fill="#bbb"/><rect x="5" y="17" width="1" height="1" fill="#aaa"/><rect x="41" y="3" width="1" height="1" fill="#ccc"/><rect x="58" y="17" width="1" height="1" fill="#999"/><rect x="53" y="9" width="1" height="1" fill="#bbb"/><rect x="54" y="12" width="1" height="1" fill="#999"/><rect x="57" y="16" width="1" height="1" fill="#ccc"/><rect x="22" y="0" width="1" height="1" fill="#aaa"/><rect x="62" y="14" width="1" height="1" fill="#bbb"/><rect x="57" y="14" width="1" height="1" fill="#bbb"/></pattern><pattern id="pf" width="67" height="7" patternUnits="userSpaceOnUse"><rect x="60" y="3" width="1" height="1" fill="#ccc"/><rect x="8" y="1" width="1" height="1" fill="#ddd"/><rect x="55" y="2" width="1" height="1" fill="#ccc"/><rect x="56" y="4" width="1" height="1" fill="#bbb"/><rect x="5" y="0" width="1" height="1" fill="#bbb"/><rect x="16" y="0" width="1" height="1" fill="#bbb"/><rect x="40" y="6" width="1" height="1" fill="#bbb"/><rect x="65" y="0" width="1" height="1" fill="#ccc"/><rect x="64" y="3" width="1" height="1" fill="#bbb"/><rect x="17" y="0" width="1" height="1" fill="#ccc"/><rect x="14" y="1" width="1" height="1" fill="#ccc"/><rect x="62" y="2" width="1" height="1" fill="#ccc"/><rect x="28" y="0" width="1" height="1" fill="#ddd"/><rect x="32" y="1" width="1" height="1" fill="#ddd"/><rect x="35" y="6" width="1" height="1" fill="#ddd"/><rect x="18" y="2" width="1" height="1" fill="#bbb"/><rect x="61" y="1" width="1" height="1" fill="#bbb"/><rect x="33" y="4" width="1" height="1" fill="#bbb"/><rect x="30" y="2" width="1" height="1" fill="#ddd"/><rect x="4" y="1" width="1" height="1" fill="#ccc"/><rect x="51" y="1" width="1" height="1" fill="#bbb"/><rect x="35" y="5" width="1" height="1" fill="#ddd"/><rect x="48" y="1" width="1" height="1" fill="#ddd"/><rect x="14" y="6" width="1" height="1" fill="#bbb"/><rect x="6" y="5" width="1" height="1" fill="#ddd"/></pattern></defs><rect x="68" y="253" width="48" height="10" fill="url(#pn)"/><rect x="66" y="248" width="52" height="18" fill="url(#pnh)"/><rect x="121" y="253" width="39" height="10" fill="url(#pn)"/><rect x="119" y="248" width="43" height="18" fill="url(#pnh)"/><rect x="70" y="268" width="23" height="10" fill="url(#pg)"/><rect x="104" y="268" width="47" height="10" fill="url(#pg)"/><rect x="158" y="268" width="92" height="10" fill="url(#pg)"/><rect x="68" y="264" width="190" height="18" fill="url(#pgh)"/><rect x="68" y="281" width="188" height="7" fill="url(#pf)"/><rect x="68" y="294" width="45" height="10" fill="url(#pn)"/><rect x="66" y="289" width="49" height="18" fill="url(#pnh)"/><rect x="118" y="294" width="37" height="10" fill="url(#pn)"/><rect x="116" y="289" width="41" height="18" fill="url(#pnh)"/><rect x="70" y="309" width="23" height="10" fill="url(#pg)"/><rect x="104" y="309" width="47" height="10" fill="url(#pg)"/><rect x="158" y="309" width="92" height="10" fill="url(#pg)"/><rect x="68" y="305" width="190" height="18" fill="url(#pgh)"/><rect x="68" y="322" width="188" height="7" fill="url(#pf)"/><rect x="68" y="335" width="45" height="10" fill="url(#pn)"/><rect x="66" y="330" width="49" height="18" fill="url(#pnh)"/><rect x="118" y="335" width="37" height="10" fill="url(#pn)"/><rect x="116" y="330" width="41" height="18" fill="url(#pnh)"/><rect x="70" y="350" width="19" height="10" fill="url(#pg)"/><rect x="98" y="350" width="38" height="10" fill="url(#pg)"/><rect x="142" y="350" width="74" height="10" fill="url(#pg)"/><rect x="68" y="346" width="156" height="18" fill="url(#pgh)"/><rect x="68" y="363" width="188" height="7" fill="url(#pf)"/><rect x="68" y="376" width="61" height="10" fill="url(#pn)"/><rect x="66" y="371" width="65" height="18" fill="url(#pnh)"/><rect x="134" y="376" width="51" height="10" fill="url(#pn)"/><rect x="132" y="371" width="55" height="18" fill="url(#pnh)"/><rect x="70" y="391" width="19" height="10" fill="url(#pg)"/><rect x="98" y="391" width="38" height="10" fill="url(#pg)"/><rect x="142" y="391" width="74" height="10" fill="url(#pg)"/><rect x="68" y="387" width="156" height="18" fill="url(#pgh)"/><rect x="68" y="404" width="188" height="7" fill="url(#pf)"/><rect x="68" y="417" width="54" height="10" fill="url(#pn)"/><rect x="66" y="412" width="58" height="18" fill="url(#pnh)"/><rect x="127" y="417" width="45" height="10" fill="url(#pn)"/><rect x="125" y="412" width="49" height="18" fill="url(#pnh)"/><rect x="70" y="432" width="22" height="10" fill="url(#pg)"/><rect x="102" y="432" width="44" height="10" fill="url(#pg)"/><rect x="153" y="432" width="87" height="10" fill="url(#pg)"/><rect x="68" y="428" width="180" height="18" fill="url(#pgh)"/><rect x="68" y="445" width="188" height="7" fill="url(#pf)"/><rect x="68" y="458" width="50" height="10" fill="url(#pn)"/><rect x="66" y="453" width="54" height="18" fill="url(#pnh)"/><rect x="123" y="458" width="41" height="10" fill="url(#pn)"/><rect x="121" y="453" width="45" height="18" fill="url(#pnh)"/><rect x="70" y="473" width="22" height="10" fill="url(#pg)"/><rect x="102" y="473" width="44" height="10" fill="url(#pg)"/><rect x="152" y="473" width="86" height="10" fill="url(#pg)"/><rect x="68" y="469" width="178" height="18" fill="url(#pgh)"/><rect x="68" y="486" width="188" height="7" fill="url(#pf)"/><rect x="68" y="499" width="71" height="10" fill="url(#pn)"/><rect x="66" y="494" width="75" height="18" fill="url(#pnh)"/><rect x="144" y="499" width="60" height="10" fill="url(#pn)"/><rect x="142" y="494" width="64" height="18" fill="url(#pnh)"/><rect x="70" y="514" width="22" height="10" fill="url(#pg)"/><rect x="102" y="514" width="44" height="10" fill="url(#pg)"/><rect x="152" y="514" width="86" height="10" fill="url(#pg)"/><rect x="68" y="510" width="178" height="18" fill="url(#pgh)"/><rect x="68" y="527" width="188" height="7" fill="url(#pf)"/><rect x="68" y="540" width="45" height="10" fill="url(#pn)"/><rect x="66" y="535" width="49" height="18" fill="url(#pnh)"/><rect x="118" y="540" width="37" height="10" fill="url(#pn)"/><rect x="116" y="535" width="41" height="18" fill="url(#pnh)"/><rect x="70" y="555" width="22" height="10" fill="url(#pg)"/><rect x="102" y="555" width="44" height="10" fill="url(#pg)"/><rect x="152" y="555" width="86" height="10" fill="url(#pg)"/><rect x="68" y="551" width="178" height="18" fill="url(#pgh)"/><rect x="68" y="568" width="188" height="7" fill="url(#pf)"/><rect x="68" y="581" width="45" height="10" fill="url(#pn)"/><rect x="66" y="576" width="49" height="18" fill="url(#pnh)"/><rect x="118" y="581" width="37" height="10" fill="url(#pn)"/><rect x="116" y="576" width="41" height="18" fill="url(#pnh)"/><rect x="70" y="596" width="22" height="10" fill="url(#pg)"/><rect x="102" y="596" width="44" height="10" fill="url(#pg)"/><rect x="152" y="596" width="86" height="10" fill="url(#pg)"/><rect x="68" y="592" width="178" height="18" fill="url(#pgh)"/><rect x="68" y="609" width="188" height="7" fill="url(#pf)"/><rect x="68" y="622" width="44" height="10" fill="url(#pn)"/><rect x="66" y="617" width="48" height="18" fill="url(#pnh)"/><rect x="117" y="622" width="35" height="10" fill="url(#pn)"/><rect x="115" y="617" width="39" height="18" fill="url(#pnh)"/><rect x="70" y="637" width="22" height="10" fill="url(#pg)"/><rect x="102" y="637" width="44" height="10" fill="url(#pg)"/><rect x="153" y="637" width="87" height="10" fill="url(#pg)"/><rect x="68" y="633" width="180" height="18" fill="url(#pgh)"/><rect x="68" y="650" width="188" height="7" fill="url(#pf)"/></svg>

<!-- right panels -->
<div class="abs" style="left:1196px;top:204px;width:300px;height:273px;background:#f5f5f5;border-radius:10px"></div>
<div class="abs" style="left:1209px;top:222.5px;font-size:14.6px;font-weight:bold;color:#333">Počet žiakov podľa prospechu:</div>
<svg class="abs" style="left:1196px;top:204px" width="263" height="273" viewBox="1196 204 263 273">
<path d="M1370.5 358.5L1370.50 269.00A89.5 89.5 0 0 1 1439.10 301.02Z" fill="#3366cc" stroke="#fff" stroke-width="1"/><path d="M1370.5 358.5L1439.10 301.02A89.5 89.5 0 0 1 1459.94 361.87Z" fill="#dc3912" stroke="#fff" stroke-width="1"/><path d="M1370.5 358.5L1459.94 361.87A89.5 89.5 0 0 1 1340.18 442.71Z" fill="#ff9900" stroke="#fff" stroke-width="1"/><path d="M1370.5 358.5L1340.18 442.71A89.5 89.5 0 0 1 1318.35 431.24Z" fill="#109618" stroke="#fff" stroke-width="1"/><path d="M1370.5 358.5L1318.35 431.24A89.5 89.5 0 0 1 1308.82 293.64Z" fill="#990099" stroke="#fff" stroke-width="1"/><path d="M1370.5 358.5L1308.82 293.64A89.5 89.5 0 0 1 1370.50 269.00Z" fill="#0099c6" stroke="#fff" stroke-width="1"/><path d="M1209 307.5H1271.5V300.5H1338" fill="none" stroke="#636363" stroke-width="1"/><path d="M1209 364.5H1302" fill="none" stroke="#636363" stroke-width="1"/><path d="M1209 418.5H1342" fill="none" stroke="#636363" stroke-width="1"/><path d="M1400 296.5H1459" fill="none" stroke="#636363" stroke-width="1"/><path d="M1438 340.5H1459" fill="none" stroke="#636363" stroke-width="1"/><path d="M1409 414.5H1459" fill="none" stroke="#636363" stroke-width="1"/><circle cx="1338" cy="300.5" r="2" fill="#636363"/><circle cx="1302" cy="364.5" r="2" fill="#636363"/><circle cx="1342" cy="418.5" r="2" fill="#636363"/><circle cx="1400" cy="296.5" r="2" fill="#636363"/><circle cx="1438" cy="340.5" r="2" fill="#636363"/><circle cx="1409" cy="414.5" r="2" fill="#636363"/><text x="1400" y="300" font-family="Liberation Sans" font-size="10.5" fill="#fff" text-anchor="middle">13.9%</text><text x="1345" y="298" font-family="Liberation Sans" font-size="10.5" fill="#fff" text-anchor="middle">12.1%</text><text x="1432.5" y="342" font-family="Liberation Sans" font-size="10.5" fill="#fff" text-anchor="middle">11.7%</text><text x="1301" y="367" font-family="Liberation Sans" font-size="10.5" fill="#fff" text-anchor="middle">28%</text><text x="1408" y="418" font-family="Liberation Sans" font-size="10.5" fill="#fff" text-anchor="middle">29.9%</text><text x="1209" y="277" font-family="Liberation Sans" font-size="10.4" fill="#222">prospel(a)</text><text x="1209" y="291" font-family="Liberation Sans" font-size="10.4" fill="#222">veľmi dobre:</text><text x="1209" y="305" font-family="Liberation Sans" font-size="10.4" fill="#222">77x</text><text x="1209" y="320" font-family="Liberation Sans" font-size="10.4" fill="#999">12.1%</text><text x="1209" y="346" font-family="Liberation Sans" font-size="10.4" fill="#222">prospel(a) s</text><text x="1209" y="360" font-family="Liberation Sans" font-size="10.4" fill="#222">vyznamena…</text><text x="1209" y="376" font-family="Liberation Sans" font-size="10.4" fill="#999">28%</text><text x="1209" y="415" font-family="Liberation Sans" font-size="10.4" fill="#222">ø: 28x</text><text x="1209" y="431" font-family="Liberation Sans" font-size="10.4" fill="#999">4.4%</text>
</svg>
<div class="abs" style="left:1196px;top:485px;width:300px;height:191px;background:#f5f5f5;border-radius:10px"></div>
<div class="abs" style="left:1196px;top:684px;width:300px;height:40px;background:#f5f5f5;border-radius:10px"></div>
<div class="abs" style="left:1209px;top:504px;font-size:12px;color:#808080">Počet žiakov podľa prospechu:</div>
<div class="abs" style="left:1209px;top:522px;font-size:12px;color:#333;line-height:23px">
<div style="position:relative;padding-left:28px">prospel(a): 88<i></i></div>
<div style="position:relative;padding-left:28px">neprospel(a): 74</div>
<div style="position:relative;padding-left:28px">neklasifikovaný(á): 190</div>
<div style="position:relative;padding-left:28px">ø: 28</div>
<div style="position:relative;padding-left:28px">prospel(a) s vyznamenaním: 178</div>
<div style="position:relative;padding-left:28px">prospel(a) veľmi dobre: 77</div>
</div>
<div class="abs" style="left:1218px;top:529px;width:6px;height:6px;border:1.5px solid #555;border-radius:50%"></div><div class="abs" style="left:1218px;top:552px;width:6px;height:6px;border:1.5px solid #555;border-radius:50%"></div><div class="abs" style="left:1218px;top:575px;width:6px;height:6px;border:1.5px solid #555;border-radius:50%"></div><div class="abs" style="left:1218px;top:598px;width:6px;height:6px;border:1.5px solid #555;border-radius:50%"></div><div class="abs" style="left:1218px;top:621px;width:6px;height:6px;border:1.5px solid #555;border-radius:50%"></div><div class="abs" style="left:1218px;top:644px;width:6px;height:6px;border:1.5px solid #555;border-radius:50%"></div>
</body></html>
